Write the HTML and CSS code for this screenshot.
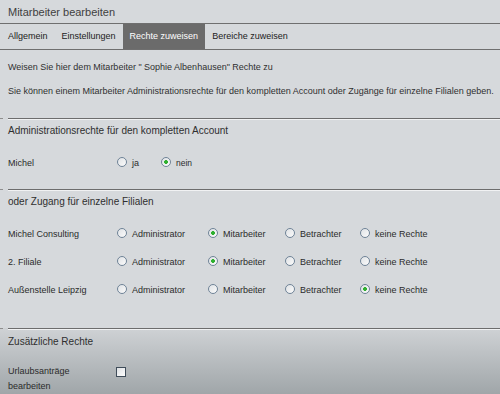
FILE: index.html
```html
<!DOCTYPE html>
<html lang="de">
  <head>
    <meta charset="UTF-8" />
    <meta name="viewport" content="width=device-width, initial-scale=1.0" />
    <title>Mitarbeiter bearbeiten</title>
    <link rel="stylesheet" href="styles.css">
  </head>
  <body>
    <h1 class="title">Mitarbeiter bearbeiten</h1>

    <ul class="tabs">
      <li class="tab">Allgemein</li>
      <li class="tab">Einstellungen</li>
      <li class="tab active">Rechte zuweisen</li>
      <li class="tab">Bereiche zuweisen</li>
    </ul>

    <p class="intro">Weisen Sie hier dem Mitarbeiter " Sophie Albenhausen" Rechte zu</p>
    <p class="intro">Sie können einem Mitarbeiter Administrationsrechte für den kompletten Account oder Zugänge für einzelne Filialen geben.</p>

    <!-- Rechte für den ganzen Account -->
    <section class="block block-account">
      <div class="sep"></div>
      <h2>Administrationsrechte für den kompletten Account</h2>
      <div class="rows">
        <div class="row row-account">
          <span class="name">Michel</span>
          <label class="opt"><input type="radio" name="admin" /> ja</label>
          <label class="opt opt-small"><input type="radio" name="admin" checked /> nein</label>
        </div>
      </div>
    </section>

    <!-- Rechte pro Filiale -->
    <section class="block block-branches">
      <div class="sep"></div>
      <h2>oder Zugang für einzelne Filialen</h2>

      <div class="rows">
        <div class="row row-branch">
          <span class="name">Michel Consulting</span>
          <label class="opt"><input type="radio" name="f1" /> Administrator</label>
          <label class="opt"><input type="radio" name="f1" checked /> Mitarbeiter</label>
          <label class="opt"><input type="radio" name="f1" /> Betrachter</label>
          <label class="opt"><input type="radio" name="f1" /> keine Rechte</label>
        </div>

        <div class="row row-branch">
          <span class="name">2. Filiale</span>
          <label class="opt"><input type="radio" name="f2" /> Administrator</label>
          <label class="opt"><input type="radio" name="f2" checked /> Mitarbeiter</label>
          <label class="opt"><input type="radio" name="f2" /> Betrachter</label>
          <label class="opt"><input type="radio" name="f2" /> keine Rechte</label>
        </div>

        <div class="row row-branch">
          <span class="name">Außenstelle Leipzig</span>
          <label class="opt"><input type="radio" name="f3" /> Administrator</label>
          <label class="opt"><input type="radio" name="f3" /> Mitarbeiter</label>
          <label class="opt"><input type="radio" name="f3" /> Betrachter</label>
          <label class="opt"><input type="radio" name="f3" checked /> keine Rechte</label>
        </div>
      </div>
    </section>

    <!-- Zusätzliche Rechte -->
    <section class="block block-extra">
      <div class="sep"></div>
      <h2>Zusätzliche Rechte</h2>
      <div class="row-extra">
        <label class="name" for="urlaub">Urlaubsanträge<br />bearbeiten</label>
        <input type="checkbox" id="urlaub" />
      </div>
    </section>
  </body>
</html>
```

FILE: styles.css
```css
body {
  margin: 0;
  font-family: "Liberation Sans", Arial, sans-serif;
  font-size: 9px;
  color: #2b2b2b;
  background-color: #d6d9dc;
  overflow: hidden;
}

.title {
  margin: 0;
  height: 21px;
  padding: 2px 0 0 8px;
  line-height: 21px;
  font-size: 11px;
  font-weight: normal;
  color: #3f3f3f;
  border-bottom: 1px solid #6f6f6f;
}

/* Tabs */
.tabs {
  display: flex;
  list-style: none;
  margin: 0;
  padding: 0 0 0 1px;
  height: 25px;
  border-bottom: 1px solid #6f6f6f;
}

.tab {
  padding: 0 7px;
  line-height: 25px;
  color: #222;
}

.tab.active {
  background-color: #6b6b6b;
  color: #fff;
}

.intro {
  margin: 10px 0 0 8px;
  line-height: 14px;
  color: #303030;
  white-space: nowrap;
}

/* Sections */
.block-account {
  margin-top: 20px;
}

.block-branches {
  margin-top: 12px;
}

.block-extra {
  margin-top: 24px;
  min-height: 80px;
  background: linear-gradient(#cfd2d5, #a0a6a9 66px);
}

.sep {
  display: flex;
  gap: 5px;
  height: 2px;
}

.sep::before {
  content: "";
  width: 3px;
  border-top: 1px solid #8e8e8e;
}

.sep::after {
  content: "";
  flex: 1;
  border-top: 1px solid #6d6d6d;
  border-bottom: 1px solid #f1f2f3;
}

h2 {
  margin: 4px 0 0;
  padding-left: 8px;
  font-size: 10px;
  font-weight: normal;
  line-height: 14px;
  color: #2f2f2f;
}

.block-extra h2 {
  margin-top: 5px;
}

.rows {
  margin-top: 11px;
}

.row {
  display: grid;
  align-items: center;
  height: 28px;
  padding-left: 8px;
}

.row-account {
  grid-template-columns: 109px 44px auto;
}

.row-branch {
  grid-template-columns: 109px 91px 77px 75px auto;
}

.opt {
  display: flex;
  align-items: center;
  gap: 5px;
}

.opt-small {
  font-size: 8.5px;
}

/* Radios */
input[type="radio"] {
  appearance: none;
  box-sizing: border-box;
  width: 10px;
  height: 10px;
  margin: 0 0 3px;
  border: 1px solid #6f8397;
  border-radius: 50%;
  background: linear-gradient(135deg, #dfe2e5, #fbfbfb);
}

input[type="radio"]:checked {
  background: radial-gradient(circle, #2fb02f 0 1.6px, transparent 2.2px),
    linear-gradient(135deg, #dfe2e5, #fbfbfb);
}

.row-extra {
  display: grid;
  grid-template-columns: 108px auto;
  align-items: start;
  margin-top: 15px;
  padding-left: 8px;
  line-height: 15px;
}

input[type="checkbox"] {
  appearance: none;
  box-sizing: border-box;
  width: 10px;
  height: 10px;
  margin: 3px 0 0;
  border: 1px solid #3f4c59;
  background: linear-gradient(135deg, #dde0e3, #fdfdfd);
}
```
